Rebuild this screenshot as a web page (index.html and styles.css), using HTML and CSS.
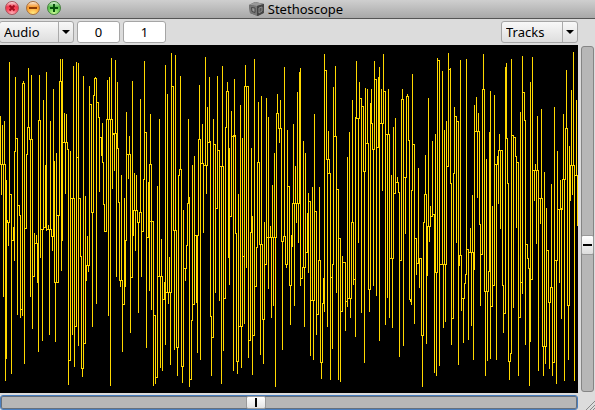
FILE: index.html
```html
<!DOCTYPE html>
<html lang="en">
<head>
<meta charset="utf-8">
<title>Stethoscope</title>
<link rel="stylesheet" href="styles.css">
</head>
<body>
<main class="window">
  <header class="titlebar">
    <div class="lights">
      <button class="light light-close" aria-label="Close"><svg viewBox="0 0 12 12"><path d="M3.500 3.500l5 5M8.500 3.500l-5 5"/></svg></button>
      <button class="light light-min" aria-label="Minimize"><svg viewBox="0 0 12 12"><path d="M2 6h8"/></svg></button>
      <button class="light light-zoom" aria-label="Zoom"><svg viewBox="0 0 12 12"><path d="M2 6h8M6 2v8"/></svg></button>
    </div>
    <h1 class="title">
      <svg class="cube" viewBox="0 0 16 16" aria-hidden="true">
        <path d="M0 4L6 1L15 3L15 12L9 15L1 12Z" fill="#4b4b4b"/>
        <path d="M0 4L6 1L15 3L8 5Z" fill="#999"/>
        <path d="M0 4L8 5L8 15L1 12Z" fill="#777"/>
        <path d="M8 5L15 3L14 12L8 15Z" fill="#444"/>
        <path d="M2.500 6.500L6 7V11.500L3 10.500Z" fill="#999" stroke="#444"/>
        <path d="M10 7L13 6V10L10 12Z" fill="#555" stroke="#888"/>
      </svg>
      Stethoscope
    </h1>
  </header>
  <form class="toolbar">
    <span class="picker"><select class="select" aria-label="Rate"><option>Audio</option><option>Control</option></select></span>
    <input class="number" type="text" value="0" aria-label="First channel">
    <input class="number" type="text" value="1" aria-label="Channel count">
    <span class="picker picker-end"><select class="select" aria-label="Display mode"><option>Tracks</option><option>Overlay</option><option>X/Y</option></select></span>
  </form>
  <section class="body">
    <svg class="scope" role="img" aria-label="Waveform"><path id="wave" transform="translate(.5 .5)"/></svg>
    <input class="slider slider-v" type="range" min="0" max="100" value="58" aria-label="Vertical zoom">
    <input class="slider slider-h" type="range" min="0" max="100" value="44" aria-label="Horizontal zoom">
    <svg class="grip" viewBox="0 0 17 17" aria-hidden="true"><path d="M8 17L17 8M12 17L17 12M15 17L17 15"/></svg>
  </section>
</main>
<script src="wave.js"></script>
</body>
</html>
```
FILE: styles.css
```css
* { box-sizing: border-box; }
body {
  margin: 0;
  background: #dcdcdc;
  color: #000;
  font: 13px/18px "Noto Sans", "Open Sans", sans-serif;
}
.window {
  display: flex;
  flex-direction: column;
  min-height: 100vh;
  overflow: hidden;
}
.titlebar {
  display: grid;
  grid-template-columns: 1fr auto 1fr;
  align-items: center;
  height: 19px;
  padding: 0 5px;
  background: linear-gradient(#cfcfcf, #a8a8a8);
  border-bottom: 1px solid #555;
}
.lights { display: flex; gap: 7px; height: 16px; }
.light {
  width: 14px;
  height: 14px;
  padding: 0;
  border: 1px solid;
  border-radius: 50%;
}
.light svg { display: block; width: 12px; height: 12px; }
.light path { fill: none; stroke-width: 2; }
.light-close { border-color: #a8525a; background: linear-gradient(#ffe3e5, transparent 40%), radial-gradient(circle at 50% 100%, #ffb9c0, #fb4256 50%, #d52a3c); }
.light-close path { stroke: #a30d1e; }
.light-min { border-color: #a8703d; background: linear-gradient(#fff0dc, transparent 40%), radial-gradient(circle at 50% 100%, #fff08a, #ffa836 50%, #dd7420); }
.light-min path { stroke: #8d3c05; }
.light-zoom { border-color: #44803d; background: linear-gradient(#e6f8df, transparent 40%), radial-gradient(circle at 50% 100%, #d5ff9b, #66cc55 50%, #2f9330); }
.light-zoom path { stroke: #07500c; }
.title {
  display: flex;
  align-items: center;
  gap: 3px;
  margin: 0;
  padding-right: 3px;
  font-size: 13px;
  font-weight: 400;
  line-height: 18px;
}
.cube { width: 16px; height: 16px; }
.toolbar {
  display: flex;
  gap: 3px;
  height: 26px;
  padding: 2px 17px 2px 0;
}
.picker { position: relative; width: 75px; margin-left: -1px; }
.picker-end { width: 77px; margin-left: auto; }
.select, .number {
  height: 22px;
  margin: 0;
  border: 1px solid #a5a5a5;
  border-radius: 3px;
  outline: 0;
  color: #000;
  font: inherit;
}
.select {
  width: 100%;
  padding: 0 20px 0 4px;
  appearance: none;
  background: linear-gradient(#f8f8f8, #dedede);
}
.picker::before, .picker::after {
  content: "";
  position: absolute;
  pointer-events: none;
}
.picker::before { top: 1px; bottom: 1px; right: 15px; border-left: 1px solid #aaa; }
.picker::after { top: 9px; right: 4px; border: 4px solid transparent; border-top-color: #000; border-bottom: 0; }
.number { width: 43px; padding: 0; background: #fff; text-align: center; }
.body {
  flex: 1;
  display: grid;
  grid-template-columns: 1fr 17px;
  grid-template-rows: 1fr 17px;
}
.scope { width: 100%; height: 100%; min-height: 348px; background: #000; }
.scope path { fill: none; stroke: #ffd900; stroke-width: 1; stroke-linecap: square; shape-rendering: crispEdges; }
.slider {
  appearance: none;
  margin: 0;
  border: 1px solid #858585;
  border-radius: 3px;
  outline: 0;
  background: #b7b7b7;
}
.slider-v { writing-mode: vertical-lr; width: 13px; height: auto; margin: 1px 1px 1px 3px; }
.slider-h { width: 100%; height: 15px; margin-top: 2px; border-color: #4a7fbf; box-shadow: inset 0 0 0 1px #66707c; }
.slider::-webkit-slider-thumb {
  appearance: none;
  border: 1px solid #999;
  border-radius: 2px;
}
.slider-v::-webkit-slider-thumb {
  width: 13px;
  height: 20px;
  background: linear-gradient(#000, #000) center / 9px 2px no-repeat, linear-gradient(#fff, #ddd);
}
.slider-h::-webkit-slider-thumb {
  width: 20px;
  height: 13px;
  background: linear-gradient(#000, #000) center / 2px 9px no-repeat, linear-gradient(#fff, #e4e4e4);
}
.grip { width: 17px; height: 17px; }
.grip path { fill: none; stroke: #888; }
```
FILE: wave.js
```js
// Each column of the trace: x, top, bottom.
const columns = `
0 71 119,1 119 149,2 80 119,3 119 251,4 76 119,5 119 335,6 135 313,7 175 177,8 177 200,9 17 177,
11 149 328,13 182 195,14 106 215,15 32 106,17 93 269,19 160 170,20 170 272,22 38 270,23 36 38,24 38 318,
26 109 183,27 82 109,28 23 82,29 82 94,30 94 251,31 30 94,32 94 283,34 188 231,36 190 198,37 198 237,
38 75 306,39 30 75,40 75 212,42 184 295,43 55 183,45 120 182,46 27 185,48 180 184,49 184 289,50 76 184,
51 184 191,52 191 205,53 44 191,54 116 237,55 237 296,56 108 237,58 170 237,59 36 170,60 14 36,61 36 225,
62 14 195,64 68 97,65 97 148,66 69 97,67 97 104,68 104 339,70 106 315,72 154 289,73 21 153,74 153 321,
76 17 281,78 18 300,80 153 211,81 211 323,82 323 331,83 31 323,85 151 298,86 220 235,87 191 220,88 220 226,
89 41 220,91 59 167,92 167 281,93 50 167,94 33 50,95 32 33,96 33 258,98 57 72,99 72 146,101 92 110,
102 78 117,103 117 159,104 159 186,106 74 186,107 35 74,108 74 270,109 32 74,110 74 340,111 13 74,112 74 143,
114 88 125,115 15 88,116 88 231,117 37 103,118 103 157,119 157 235,120 235 241,121 130 235,122 235 306,
124 153 259,125 195 241,126 67 195,128 109 133,129 91 109,130 109 287,132 36 232,133 165 190,134 128 165,
135 165 205,136 130 165,137 165 177,138 177 267,139 167 177,140 54 167,141 167 231,143 134 186,144 16 134,
146 87 302,148 137 192,149 119 245,150 69 119,151 119 264,153 176 340,155 270 338,157 141 332,159 74 231,
160 231 322,161 194 231,162 231 325,164 237 254,165 20 299,167 49 247,168 247 258,169 212 247,170 247 319,
171 8 247,173 41 185,174 185 304,175 10 185,176 185 302,177 302 330,178 130 302,179 124 130,180 31 124,
181 124 321,182 321 337,183 165 321,185 223 235,186 200 223,187 158 200,188 74 158,189 152 341,191 275 334,
192 120 275,194 111 258,196 190 257,197 190 307,198 94 190,199 40 94,200 94 314,202 79 118,203 118 187,
205 12 120,206 120 148,207 62 120,209 32 96,210 96 271,211 271 330,213 74 292,215 99 247,217 31 163,
219 105 255,221 121 338,222 21 121,223 121 305,225 82 253,226 46 82,227 37 46,228 46 212,229 103 239,
231 66 171,233 90 325,234 34 90,235 90 188,236 188 316,237 316 328,238 149 316,240 60 281,241 281 322,
242 93 281,244 41 278,245 20 41,246 41 222,248 42 312,250 187 295,251 103 187,252 171 329,254 14 290,
256 202 241,257 117 202,258 57 117,259 117 199,260 199 309,261 51 199,262 199 274,263 274 318,264 177 274,
266 53 219,268 72 243,270 181 192,271 192 272,272 140 192,273 192 260,274 108 192,275 192 341,276 68 192,
277 49 68,278 68 83,279 83 97,280 55 83,281 83 196,282 196 304,283 191 196,284 22 191,285 191 219,
286 219 222,287 85 219,289 141 240,290 240 279,291 190 240,292 158 201,293 79 158,294 158 260,295 121 158,
296 158 177,297 47 158,298 158 197,299 27 158,300 23 240,302 222 233,303 96 222,304 222 281,305 108 222,
307 168 207,308 148 227,310 156 310,312 142 255,313 255 314,314 69 255,316 166 289,318 215 269,319 142 215,
320 215 317,321 317 333,322 258 317,323 233 258,324 9 266,326 25 114,327 114 281,328 86 114,329 114 128,
330 128 334,332 219 303,333 42 219,335 21 91,336 91 247,338 144 334,340 193 336,342 211 266,345 217 285,
347 112 261,349 87 253,350 253 272,351 177 253,352 55 177,353 177 239,355 72 291,356 16 72,358 73 197,
359 37 73,361 53 267,363 61 126,364 126 317,365 43 126,367 44 98,368 98 244,369 244 266,370 58 244,
371 44 78,372 78 104,373 104 240,374 16 104,376 34 250,378 32 102,379 22 295,381 44 78,382 78 145,
383 9 78,385 46 279,387 89 252,388 44 89,389 89 272,391 130 213,392 213 282,393 82 213,395 73 148,
397 132 137,398 137 147,399 147 311,401 54 215,402 44 54,403 54 300,405 132 188,406 51 132,407 49 51,
408 51 95,409 95 254,410 254 256,411 145 259,412 29 145,414 99 278,416 193 229,418 123 217,419 213 242,
421 213 290,422 290 341,423 177 290,424 149 177,425 110 149,426 149 298,427 181 230,428 53 181,429 181 196,
430 161 181,432 96 170,434 169 327,435 89 227,436 227 330,437 13 227,439 15 320,442 26 219,443 219 282,
444 85 219,445 219 276,446 76 219,448 8 121,450 23 138,451 138 299,453 128 273,454 62 128,456 71 197,
458 76 319,459 210 220,460 15 210,461 210 265,463 253 297,464 238 253,465 229 238,466 14 229,468 204 294,
470 183 207,471 207 280,472 150 207,473 207 314,474 60 224,476 52 86,477 86 152,478 68 86,479 86 179,
480 179 260,482 44 209,483 9 44,484 44 246,485 246 330,486 114 246,487 246 315,488 226 246,489 87 226,
490 46 313,492 161 261,494 50 240,496 119 314,497 111 119,498 105 158,499 89 105,500 105 183,502 105 240,
503 240 287,505 22 268,506 18 93,507 93 138,508 138 316,509 316 334,510 308 316,511 14 308,513 90 262,
515 92 111,516 111 182,518 117 330,520 67 272,522 11 248,524 47 75,525 75 299,527 199 213,528 213 223,
529 223 340,530 37 296,532 12 234,534 125 155,535 119 125,536 125 198,537 71 125,538 125 325,540 153 178,
541 64 153,542 153 301,543 301 330,544 127 301,545 301 318,546 163 301,548 205 257,549 257 323,550 242 257,
551 139 242,552 242 330,554 62 317,556 215 338,557 106 215,559 164 237,560 135 163,561 163 273,562 134 163,
563 69 134,564 134 335,565 83 134,566 25 83,567 83 260,568 260 314,569 101 260,570 120 155,571 45 120,
572 120 149,573 7 120,574 120 335,576 55 130,577 130 180`;

// Flat runs that join columns: first x, last x, y.
const runs = `
0 5 119,5 6 313,7 9 177,9 11 149,12 13 195,14 15 106,15 17 93,18 19 160,19 20 170,20 22 264,22 24 38,
25 26 183,26 27 109,27 29 82,29 32 94,33 34 231,35 37 198,38 40 75,41 43 184,44 45 182,46 50 184,51 53 191,
54 58 237,56 59 170,59 62 36,62 67 97,67 68 104,69 70 315,71 74 153,75 76 281,76 78 112,78 80 153,
80 81 211,81 83 323,84 85 298,86 89 220,89 91 59,91 93 167,93 94 50,94 96 33,96 98 57,98 99 72,99 101 92,
102 103 117,103 104 159,104 106 186,106 112 74,113 114 89,113 117 88,117 118 103,118 119 157,119 121 235,
123 124 259,125 126 195,126 130 109,131 132 232,133 137 165,137 139 177,139 141 167,142 143 186,143 144 134,
144 146 87,147 148 192,150 151 119,150 153 176,153 155 270,155 157 332,158 162 231,163 164 254,166 171 247,
171 173 41,173 175 185,176 178 302,178 179 130,179 181 124,181 183 321,184 186 223,187 188 158,189 191 334,
191 192 275,193 194 259,195 198 190,198 200 94,201 203 118,203 207 120,208 210 97,210 211 271,211 213 292,
213 215 99,215 217 163,217 219 105,220 223 121,224 225 253,225 226 82,226 228 46,229 231 171,231 235 91,
235 236 188,236 238 316,239 242 281,242 244 211,244 248 41,249 250 295,250 251 187,253 254 290,255 256 241,
257 259 117,259 262 199,262 264 274,265 266 219,267 276 192,276 278 68,278 281 83,281 283 196,283 285 191,
285 287 219,287 289 141,289 291 240,292 299 158,300 302 233,302 305 222,306 307 207,308 310 156,311 314 255,
314 316 166,316 318 269,318 320 215,320 322 317,322 323 258,324 326 25,326 328 114,328 329 128,330 332 232,
332 333 219,333 336 91,336 338 144,338 340 193,340 342 266,342 345 217,345 347 256,347 351 253,351 353 177,
353 355 234,355 359 73,359 361 53,361 363 61,363 365 126,365 368 98,368 370 244,371 372 78,372 374 104,
374 376 34,376 378 102,379 383 78,383 385 46,385 389 89,390 393 213,393 395 148,395 398 137,398 399 147,
399 401 215,401 403 54,403 406 132,406 408 51,408 409 95,409 410 254,411 412 145,412 414 99,414 416 193,
416 418 218,419 421 213,421 423 290,423 424 177,424 426 149,427 430 181,430 432 171,432 434 169,435 437 227,
437 439 15,440 446 219,446 448 121,448 450 24,450 451 138,451 453 273,453 454 128,454 456 71,456 458 76,
459 461 210,461 463 253,464 465 238,466 468 204,468 474 207,474 479 86,479 480 179,480 482 209,482 484 44,
484 488 246,488 489 226,490 492 261,492 494 240,494 497 119,498 502 105,502 503 240,503 505 268,506 507 93,
507 508 138,508 510 316,510 511 308,511 513 90,513 515 92,515 516 111,516 518 117,518 520 272,520 522 237,
522 524 47,524 525 75,525 527 199,527 528 213,528 529 223,530 532 234,532 538 125,538 542 153,542 546 301,
546 548 205,548 550 257,550 552 242,552 554 317,554 557 215,557 562 164,562 565 134,565 567 83,567 569 260,
570 574 120,574 577 130`;

const rows = text => text.trim().split(",").map(row => row.trim().split(" "));
const vertical = rows(columns).map(([x, top, bottom]) => `M${x} ${top}V${bottom}`);
const horizontal = rows(runs).map(([from, to, y]) => `M${from} ${y}H${to}`);
document.getElementById("wave").setAttribute("d", vertical.concat(horizontal).join(""));
```
